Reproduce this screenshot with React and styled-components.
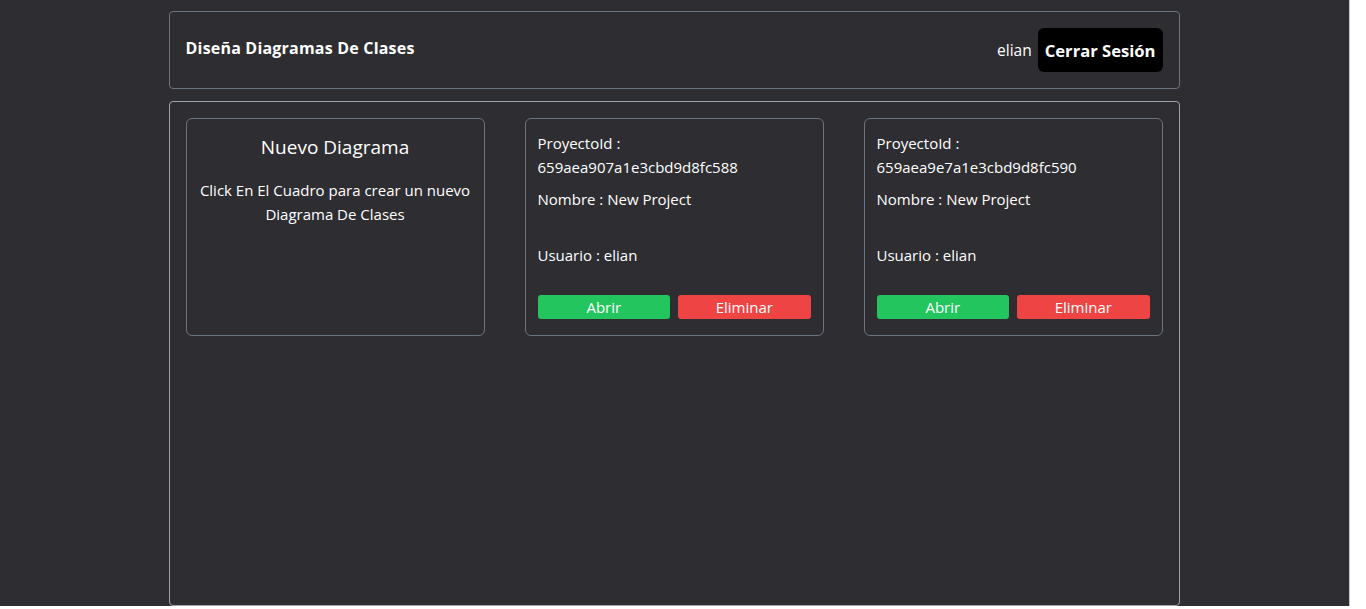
import React from "react";
import styled, { createGlobalStyle } from "styled-components";

const Global = createGlobalStyle`
  html, body { margin: 0; padding: 0; background: #ffffff; }
  body { font-family: "Segoe UI", "Open Sans", "Noto Sans", sans-serif; overflow: hidden; }
  * { box-sizing: border-box; }
`;

const Page = styled.div`
  width: 1350px;
  height: 606px;
  background: #2e2d31;
  border-right: 1px solid #c4c4c4;
  padding: 11px 1px 0 0;
  display: flex;
  flex-direction: column;
  align-items: center;
  gap: 12px;
  color: #ffffff;
`;

const Header = styled.header`
  width: 1011px;
  height: 78px;
  border: 1px solid #6b7280;
  border-radius: 4px;
  padding: 0 16px;
  display: flex;
  align-items: center;
  justify-content: space-between;
  flex-shrink: 0;
`;

const Title = styled.h1`
  margin: 0 0 5px 0;
  font-size: 16px;
  font-weight: 700;
  letter-spacing: 0.2px;
`;

const UserArea = styled.div`
  display: flex;
  align-items: center;
  gap: 6px;
  font-size: 15.5px;
`;

const LogoutButton = styled.button`
  height: 44px;
  padding: 0 7px;
  background: #000000;
  color: #ffffff;
  border: none;
  border-radius: 6px;
  font-family: inherit;
  font-size: 16.6px;
  font-weight: 700;
  cursor: pointer;
`;

const Panel = styled.main`
  width: 1011px;
  flex: 1;
  border: 1px solid #9ca3af;
  border-radius: 4px;
  padding: 16px;
  display: grid;
  grid-template-columns: repeat(3, 1fr);
  column-gap: 40px;
  align-content: start;
`;

const Card = styled.div`
  height: 218px;
  border: 1px solid #6b7280;
  border-radius: 6px;
  padding: 12px;
  display: flex;
  flex-direction: column;
  font-size: 15px;
  line-height: 24px;
  cursor: ${(p) => (p.$clickable ? "pointer" : "default")};
  text-align: ${(p) => (p.$center ? "center" : "left")};
`;

const NewTitle = styled.h2`
  margin: 2px 0 0 0;
  font-size: 19px;
  font-weight: 400;
  line-height: 28px;
`;

const NewText = styled.p`
  margin: 17px 0 0 0;
  font-size: 15px;
  line-height: 24px;
`;

const Field = styled.p`
  margin: 0 0 ${(p) => p.$gap || 0}px 0;
  overflow-wrap: anywhere;
`;

const Actions = styled.div`
  margin-top: 28px;
  display: grid;
  grid-template-columns: 1fr 1fr;
  gap: 8px;
`;

const ActionButton = styled.button`
  height: 24px;
  border: none;
  border-radius: 3px;
  background: ${(p) => (p.$danger ? "#ef4444" : "#22c55e")};
  color: #ffffff;
  font-family: inherit;
  font-size: 15px;
  line-height: 24px;
  padding: 0;
  cursor: pointer;
`;

const projects = [
  { id: "659aea907a1e3cbd9d8fc588", nombre: "New Project", usuario: "elian" },
  { id: "659aea9e7a1e3cbd9d8fc590", nombre: "New Project", usuario: "elian" },
];

export default function App() {
  return (
    <>
      <Global />
      <Page>
        <Header>
          <Title>Diseña Diagramas De Clases</Title>
          <UserArea>
            <span>elian</span>
            <LogoutButton>Cerrar Sesión</LogoutButton>
          </UserArea>
        </Header>
        <Panel>
          <Card $clickable $center>
            <NewTitle>Nuevo Diagrama</NewTitle>
            <NewText>Click En El Cuadro para crear un nuevo Diagrama De Clases</NewText>
          </Card>
          {projects.map((p) => (
            <Card key={p.id}>
              <Field $gap={8}>ProyectoId : {p.id}</Field>
              <Field $gap={32}>Nombre : {p.nombre}</Field>
              <Field>Usuario : {p.usuario}</Field>
              <Actions>
                <ActionButton>Abrir</ActionButton>
                <ActionButton $danger>Eliminar</ActionButton>
              </Actions>
            </Card>
          ))}
        </Panel>
      </Page>
    </>
  );
}
